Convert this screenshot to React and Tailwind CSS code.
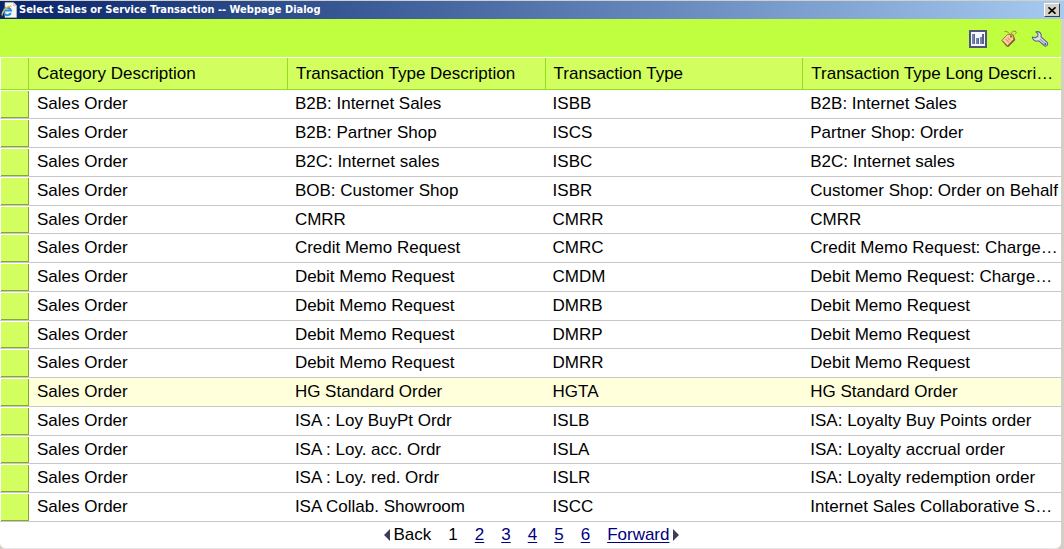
import React from "react";

const rows = [
  ["B2B: Internet Sales", "ISBB", "B2B: Internet Sales"],
  ["B2B: Partner Shop", "ISCS", "Partner Shop: Order"],
  ["B2C: Internet sales", "ISBC", "B2C: Internet sales"],
  ["BOB: Customer Shop", "ISBR", "Customer Shop: Order on Behalf"],
  ["CMRR", "CMRR", "CMRR"],
  ["Credit Memo Request", "CMRC", "Credit Memo Request: Charge…"],
  ["Debit Memo Request", "CMDM", "Debit Memo Request: Charge…"],
  ["Debit Memo Request", "DMRB", "Debit Memo Request"],
  ["Debit Memo Request", "DMRP", "Debit Memo Request"],
  ["Debit Memo Request", "DMRR", "Debit Memo Request"],
  ["HG Standard Order", "HGTA", "HG Standard Order"],
  ["ISA : Loy BuyPt Ordr", "ISLB", "ISA: Loyalty Buy Points order"],
  ["ISA : Loy. acc. Ordr", "ISLA", "ISA: Loyalty accrual order"],
  ["ISA : Loy. red. Ordr", "ISLR", "ISA: Loyalty redemption order"],
  ["ISA Collab. Showroom", "ISCC", "Internet Sales Collaborative S…"],
];

const headings = [
  "Category Description",
  "Transaction Type Description",
  "Transaction Type",
  "Transaction Type Long Descri…",
];

function PageIcon() {
  return (
    <svg viewBox="0 0 16 16" className="h-4 w-4 shrink-0" aria-hidden="true">
      <path d="M4 .5h8.5L15.500 3.500v12H4z" fill="#f6f6f2" stroke="#c8c4b8" strokeWidth=".6" />
      <path d="M12.500.5v3h3" fill="#dcdcdc" stroke="#aaa" strokeWidth=".5" />
      <path d="M9.800 11A3.700 3.700 0 1 1 10 8.500H3.600" fill="none" stroke="#2f8fdc" strokeWidth="2" />
      <path d="M1.500 13.500C-.5 11 6 3.500 10.500 4.200" fill="none" stroke="#f0bd38" strokeWidth="1.200" />
    </svg>
  );
}

function ChartIcon() {
  return (
    <svg viewBox="0 0 18 18" className="h-[18px] w-[18px]" aria-hidden="true">
      <rect x="1" y="1" width="16" height="16" fill="#f8f9fc" stroke="#50547c" strokeWidth="2" />
      <path d="M3 4h3v10H3zM7 8h3v6H7zM11 7h3v7h-3z" fill="#7387b4" />
      <path d="M5 4h1v10H5zM9 8h1v6H9zM13 4h2v10h-2z" fill="#56638e" />
    </svg>
  );
}

function TagIcon() {
  return (
    <svg viewBox="0 0 18 18" className="h-[18px] w-[18px]" aria-hidden="true">
      <path d="M7 5l6.500-.5 1.800 5.500-7 7-1.800-.5-5-6z" fill="#8a5230" />
      <path d="M2 10.200L7.500 4.500l5.200.3 1 4.400L7.500 15.800z" fill="#f8d6a2" stroke="#b07448" strokeWidth="1" />
      <path d="M5.500 9l3.500 3.500M7.500 7.500l3 3" stroke="#dd9c68" strokeWidth="1.200" />
      <circle cx="11" cy="6.800" r="1" fill="#8a5a38" />
      <path d="M11 6.500C10.500 3.500 7.500 1 4.500 1.500M11 6.500C10.500 3 12.500.8 15 1.200c2 .3 1.300 2.300.2 2.800" fill="none" stroke="#a5793f" strokeWidth="1" />
    </svg>
  );
}

function WrenchIcon() {
  return (
    <svg viewBox="0 0 18 18" className="h-[18px] w-[18px]" aria-hidden="true">
      <path
        d="M5 1.800C8.500 1 10.800 3.300 10 6.800l5.800 5.400c2 2-.3 5-2.600 3.300L7.800 10.800C4.800 12 1.300 10.300 1.300 7l3 .8 2.500-1.500.2-2.300z"
        fill="#dde1ec"
        stroke="#5b6088"
        strokeWidth="1.100"
        strokeLinejoin="round"
      />
      <path d="M9 9l4.500 4.200" stroke="#9aa1bd" strokeWidth="1.200" />
      <circle cx="14.300" cy="14" r=".9" fill="#454b70" />
    </svg>
  );
}

export default function App() {
  return (
    <main className="min-h-screen bg-[#d4d0c8] pt-px font-['Liberation_Sans',Arial,sans-serif] text-black">
      <header className="flex h-[18px] items-center gap-0.5 bg-linear-to-r from-[#0a246a] to-[#a6caf0] pr-1 pl-px">
        <PageIcon />
        <h1 className="flex-1 truncate font-['DejaVu_Sans_Condensed','DejaVu_Sans',sans-serif] text-[11px] font-bold text-white">
          Select Sales or Service Transaction -- Webpage Dialog
        </h1>
        <button
          type="button"
          aria-label="Close"
          className="flex h-[14px] w-4 items-center justify-center border border-t-white border-r-[#404040] border-b-[#404040] border-l-white bg-[#d4d0c8]"
        >
          <svg viewBox="0 0 8 7" className="h-[7px] w-2" aria-hidden="true">
            <path d="M.5.3l7 6.400M7.500.3l-7 6.400" stroke="#000" strokeWidth="1.600" />
          </svg>
        </button>
      </header>

      <div className="mr-[3px] rounded-b-md border-b border-[#e8e8e8] bg-white">
        <div className="flex h-[38px] items-center justify-end gap-[13px] bg-[#bfff40] pt-0.5 pr-3">
          <button type="button" aria-label="Chart"><ChartIcon /></button>
          <button type="button" aria-label="Tag"><TagIcon /></button>
          <button type="button" aria-label="Personalize"><WrenchIcon /></button>
        </div>

        <table className="mt-px w-full table-fixed border-separate border-spacing-0 text-left text-[17px] leading-5">
          <colgroup>
            <col className="w-[29px]" />
            <col className="w-[24.4%]" />
            <col />
            <col />
            <col />
          </colgroup>
          <thead>
            <tr className="bg-[#d2ff5f]">
              <th aria-label="Selection" className="h-8 border-r border-b border-l border-[#91e01f] border-l-white p-0" />
              {headings.map((heading) => (
                <th key={heading} className="truncate border-r border-b border-[#91e01f] py-0 pl-2 font-normal last:border-r-0">
                  {heading}
                </th>
              ))}
            </tr>
          </thead>
          <tbody>
            {rows.map(([description, type, longDescription], index) => (
              <tr key={index} className={index === 10 ? "group bg-[#ffffdc]" : "group bg-white"}>
                <td className="border-b border-[#c8c8c8] bg-white p-0 pl-px">
                  <button
                    type="button"
                    aria-label={"Select " + description}
                    className="mt-px block h-[27px] w-full border-r border-b border-[#86a832] bg-[#d2ff5f] group-nth-[4n+5]:h-[26px]"
                  />
                </td>
                <td className="truncate border-b border-[#c8c8c8] py-0 pl-2">Sales Order</td>
                <td className="truncate border-b border-[#c8c8c8] py-0 pl-[7px]">{description}</td>
                <td className="truncate border-b border-[#c8c8c8] py-0 pl-[7px]">{type}</td>
                <td className="truncate border-b border-[#c8c8c8] py-0 pl-[7px]">{longDescription}</td>
              </tr>
            ))}
          </tbody>
        </table>

        <nav aria-label="Pages" className="flex h-[26px] items-center justify-center gap-[17px] pl-0.5 text-[17px] leading-5">
          <span className="flex items-center gap-1">
            <svg viewBox="0 0 6 12" className="h-3 w-1.5" aria-hidden="true"><path d="M6 0v12L0 6z" fill="#3d3d58" /></svg>
            Back
          </span>
          <span aria-current="page">1</span>
          {[2, 3, 4, 5, 6].map((page) => (
            <a key={page} href={"#page-" + page} className="text-[#000080] underline underline-offset-2">{page}</a>
          ))}
          <a href="#next" className="flex items-center gap-1 text-[#000080]">
            <span className="underline underline-offset-2">Forward</span>
            <svg viewBox="0 0 6 12" className="h-3 w-1.5" aria-hidden="true"><path d="M0 0v12l6-6z" fill="#3d3d58" /></svg>
          </a>
        </nav>
      </div>
    </main>
  );
}
